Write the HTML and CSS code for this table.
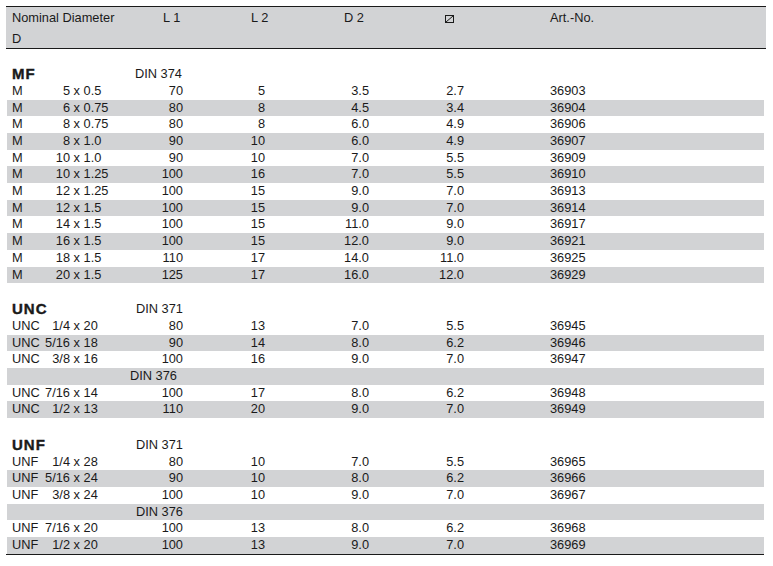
FILE: index.html
```html
<!DOCTYPE html>
<html>
<head>
<meta charset="utf-8">
<link rel="stylesheet" href="styles.css">
</head>
<body>
<div class="sheet">
  <div class="head">
    <div class="hc h-nom">Nominal Diameter<br>D</div>
    <div class="hc h-l1">L 1</div>
    <div class="hc h-l2">L 2</div>
    <div class="hc h-d2">D 2</div>
    <div class="hc h-sq"><svg class="sq" width="9" height="8" viewBox="0 0 9 8"><rect x="0.5" y="0.5" width="8" height="7" fill="none" stroke="#1a1a1a" stroke-width="1"/><line x1="1" y1="7" x2="8" y2="1" stroke="#1a1a1a" stroke-width="1"/></svg></div>
    <div class="hc h-art">Art.-No.</div>
  </div>

  <div class="sec sec-mf">
    <div class="row title"><div class="grp">MF</div><div class="din">DIN 374</div></div>
    <div class="row"><div class="c1"><span class="t">M</span><span class="d">5</span> x 0.5</div><div class="n">70</div><div class="n">5</div><div class="n">3.5</div><div class="n">2.7</div><div class="art">36903</div></div>
    <div class="row alt"><div class="c1"><span class="t">M</span><span class="d">6</span> x 0.75</div><div class="n">80</div><div class="n">8</div><div class="n">4.5</div><div class="n">3.4</div><div class="art">36904</div></div>
    <div class="row"><div class="c1"><span class="t">M</span><span class="d">8</span> x 0.75</div><div class="n">80</div><div class="n">8</div><div class="n">6.0</div><div class="n">4.9</div><div class="art">36906</div></div>
    <div class="row alt"><div class="c1"><span class="t">M</span><span class="d">8</span> x 1.0</div><div class="n">90</div><div class="n">10</div><div class="n">6.0</div><div class="n">4.9</div><div class="art">36907</div></div>
    <div class="row"><div class="c1"><span class="t">M</span><span class="d">10</span> x 1.0</div><div class="n">90</div><div class="n">10</div><div class="n">7.0</div><div class="n">5.5</div><div class="art">36909</div></div>
    <div class="row alt"><div class="c1"><span class="t">M</span><span class="d">10</span> x 1.25</div><div class="n">100</div><div class="n">16</div><div class="n">7.0</div><div class="n">5.5</div><div class="art">36910</div></div>
    <div class="row"><div class="c1"><span class="t">M</span><span class="d">12</span> x 1.25</div><div class="n">100</div><div class="n">15</div><div class="n">9.0</div><div class="n">7.0</div><div class="art">36913</div></div>
    <div class="row alt"><div class="c1"><span class="t">M</span><span class="d">12</span> x 1.5</div><div class="n">100</div><div class="n">15</div><div class="n">9.0</div><div class="n">7.0</div><div class="art">36914</div></div>
    <div class="row"><div class="c1"><span class="t">M</span><span class="d">14</span> x 1.5</div><div class="n">100</div><div class="n">15</div><div class="n">11.0</div><div class="n">9.0</div><div class="art">36917</div></div>
    <div class="row alt"><div class="c1"><span class="t">M</span><span class="d">16</span> x 1.5</div><div class="n">100</div><div class="n">15</div><div class="n">12.0</div><div class="n">9.0</div><div class="art">36921</div></div>
    <div class="row"><div class="c1"><span class="t">M</span><span class="d">18</span> x 1.5</div><div class="n">110</div><div class="n">17</div><div class="n">14.0</div><div class="n">11.0</div><div class="art">36925</div></div>
    <div class="row alt"><div class="c1"><span class="t">M</span><span class="d">20</span> x 1.5</div><div class="n">125</div><div class="n">17</div><div class="n">16.0</div><div class="n">12.0</div><div class="art">36929</div></div>
  </div>

  <div class="sec sec-unc">
    <div class="row title"><div class="grp">UNC</div><div class="din">DIN 371</div></div>
    <div class="row"><div class="c1"><span class="t">UNC</span><span class="d">1/4</span> x 20</div><div class="n">80</div><div class="n">13</div><div class="n">7.0</div><div class="n">5.5</div><div class="art">36945</div></div>
    <div class="row alt"><div class="c1"><span class="t">UNC</span><span class="d">5/16</span> x 18</div><div class="n">90</div><div class="n">14</div><div class="n">8.0</div><div class="n">6.2</div><div class="art">36946</div></div>
    <div class="row"><div class="c1"><span class="t">UNC</span><span class="d">3/8</span> x 16</div><div class="n">100</div><div class="n">16</div><div class="n">9.0</div><div class="n">7.0</div><div class="art">36947</div></div>
    <div class="row alt sub"><div class="c1"></div><div class="din din-left">DIN 376</div></div>
    <div class="row"><div class="c1"><span class="t">UNC</span><span class="d">7/16</span> x 14</div><div class="n">100</div><div class="n">17</div><div class="n">8.0</div><div class="n">6.2</div><div class="art">36948</div></div>
    <div class="row alt"><div class="c1"><span class="t">UNC</span><span class="d">1/2</span> x 13</div><div class="n">110</div><div class="n">20</div><div class="n">9.0</div><div class="n">7.0</div><div class="art">36949</div></div>
  </div>

  <div class="sec sec-unf">
    <div class="row title"><div class="grp">UNF</div><div class="din">DIN 371</div></div>
    <div class="row"><div class="c1"><span class="t">UNF</span><span class="d">1/4</span> x 28</div><div class="n">80</div><div class="n">10</div><div class="n">7.0</div><div class="n">5.5</div><div class="art">36965</div></div>
    <div class="row alt"><div class="c1"><span class="t">UNF</span><span class="d">5/16</span> x 24</div><div class="n">90</div><div class="n">10</div><div class="n">8.0</div><div class="n">6.2</div><div class="art">36966</div></div>
    <div class="row"><div class="c1"><span class="t">UNF</span><span class="d">3/8</span> x 24</div><div class="n">100</div><div class="n">10</div><div class="n">9.0</div><div class="n">7.0</div><div class="art">36967</div></div>
    <div class="row alt sub"><div class="c1"></div><div class="din">DIN 376</div></div>
    <div class="row"><div class="c1"><span class="t">UNF</span><span class="d">7/16</span> x 20</div><div class="n">100</div><div class="n">13</div><div class="n">8.0</div><div class="n">6.2</div><div class="art">36968</div></div>
    <div class="row alt"><div class="c1"><span class="t">UNF</span><span class="d">1/2</span> x 20</div><div class="n">100</div><div class="n">13</div><div class="n">9.0</div><div class="n">7.0</div><div class="art">36969</div></div>
  </div>
</div>
</body>
</html>
```
FILE: styles.css
```css
html, body {
  margin: 0;
  padding: 0;
  background: #ffffff;
}
body {
  font-family: "Liberation Sans", Arial, sans-serif;
  font-size: 12.8px;
  color: #1a1a1a;
}
.sheet {
  width: 757px;
  padding: 6px 0 0 7px;
}
.head,
.row {
  display: grid;
  grid-template-columns: 120px 56px 82px 104px 95px 1fr;
}
.head {
  height: 41px;
  background: #d2d3d5;
  border-top: 1px solid #1a1a1a;
  border-bottom: 1px solid #1a1a1a;
  margin-left: -1px;
  padding-left: 1px;
  margin-right: -2px;
  padding-right: 2px;
  line-height: 21px;
}
.hc {
  white-space: nowrap;
}
.h-nom { padding-left: 5px; }
.h-l1 { padding-left: 36px; }
.h-l2 { padding-left: 68px; }
.h-d2 { padding-left: 79px; }
.h-sq { padding-left: 76px; }
.h-art { padding-left: 86px; }
.sq {
  display: inline-block;
  vertical-align: -1px;
}
.sec {
  margin-top: 18px;
}
.sec-mf { margin-top: 17.3px; }
.sec-unf {
  margin-top: 18.8px;
  border-bottom: 1px solid #1a1a1a;
  margin-left: -1px;
  padding-left: 1px;
}
.row {
  height: 16.7px;
  line-height: 16.7px;
  white-space: nowrap;
}
.row.alt {
  background: #d2d3d5;
}
.c1 {
  padding-left: 5px;
}
.t {
  display: inline-block;
  width: 25px;
}
.d {
  display: inline-block;
  width: 33px;
  text-align: right;
}
.n {
  text-align: right;
}
.art {
  padding-left: 86px;
}
.grp {
  padding-left: 5px;
  font-weight: bold;
  font-size: 15px;
  letter-spacing: 1px;
  -webkit-text-stroke: 0.4px #1a1a1a;
}
.din {
  grid-column: 2 / span 2;
  padding-left: 9px;
}
.sec-mf .din { padding-left: 8px; }
.din-left { padding-left: 3px; }
```
